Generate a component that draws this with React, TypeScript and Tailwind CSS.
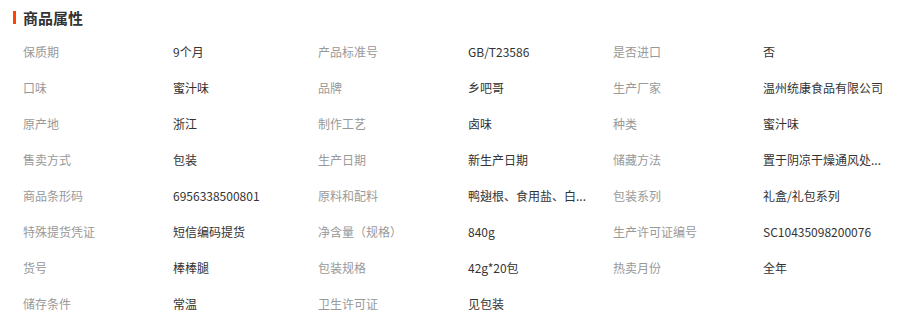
import React from 'react'

type Attr = { label: string; value: string }

const rows: Attr[][] = [
  [
    { label: '保质期', value: '9个月' },
    { label: '产品标准号', value: 'GB/T23586' },
    { label: '是否进口', value: '否' },
  ],
  [
    { label: '口味', value: '蜜汁味' },
    { label: '品牌', value: '乡吧哥' },
    { label: '生产厂家', value: '温州统康食品有限公司' },
  ],
  [
    { label: '原产地', value: '浙江' },
    { label: '制作工艺', value: '卤味' },
    { label: '种类', value: '蜜汁味' },
  ],
  [
    { label: '售卖方式', value: '包装' },
    { label: '生产日期', value: '新生产日期' },
    { label: '储藏方法', value: '置于阴凉干燥通风处...' },
  ],
  [
    { label: '商品条形码', value: '6956338500801' },
    { label: '原料和配料', value: '鸭翅根、食用盐、白...' },
    { label: '包装系列', value: '礼盒/礼包系列' },
  ],
  [
    { label: '特殊提货凭证', value: '短信编码提货' },
    { label: '净含量（规格）', value: '840g' },
    { label: '生产许可证编号', value: 'SC10435098200076' },
  ],
  [
    { label: '货号', value: '棒棒腿' },
    { label: '包装规格', value: '42g*20包' },
    { label: '热卖月份', value: '全年' },
  ],
  [
    { label: '储存条件', value: '常温' },
    { label: '卫生许可证', value: '见包装' },
  ],
]

export default function App() {
  return (
    <div className="w-[919px] h-[330px] bg-white font-['Noto_Sans_CJK_SC',sans-serif] text-[12px]">
      {/* 标题 */}
      <div className="h-[34px] flex items-center pl-[13px] gap-[7px]">
        <span className="w-[3px] h-[13px] bg-[#ff4400]" />
        <h3 className="text-[15px] font-bold text-[#333] leading-none">商品属性</h3>
      </div>

      {/* 属性列表 */}
      <div className="pl-[23px]">
        {rows.map((row, i) => (
          <div key={i} className="h-9 flex items-center">
            {row.map((attr) => (
              <div key={attr.label} className="flex items-center">
                <span className="w-[150px] text-[#999] whitespace-nowrap">{attr.label}</span>
                <span className="w-[145px] text-[#333] whitespace-nowrap">{attr.value}</span>
              </div>
            ))}
          </div>
        ))}
      </div>
    </div>
  )
}
